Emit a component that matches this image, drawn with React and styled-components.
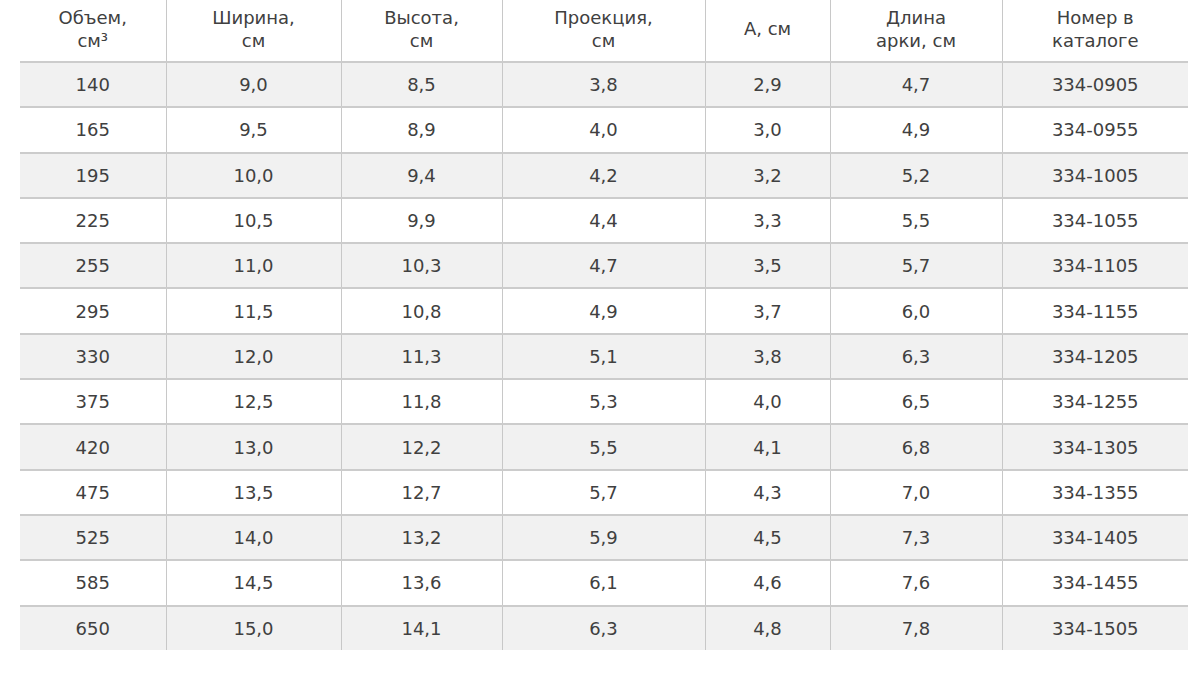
import React from 'react';
import styled, { createGlobalStyle } from 'styled-components';

const GlobalStyle = createGlobalStyle`
  body {
    margin: 0;
    background: #ffffff;
    font-family: "DejaVu Sans", Verdana, sans-serif;
  }
`;

const Wrap = styled.div`
  padding: 0 12px 0 20px;
`;

const Table = styled.table`
  width: 1168px;
  border-collapse: collapse;
  table-layout: fixed;
  color: #404040;
  font-size: 18px;
`;

const Th = styled.th`
  font-weight: normal;
  height: 57px;
  padding: 0 4px 4px;
  line-height: 23px;
  text-align: center;
  vertical-align: middle;
  border-left: 1px solid #c8c8c8;
  &:first-child {
    border-left: none;
  }
`;

const Tr = styled.tr`
  background: ${p => (p.$shaded ? '#f1f1f1' : '#ffffff')};
  border-top: 2px solid #cccccc;
`;

const Td = styled.td`
  height: 43.3px;
  padding: 0 4px;
  text-align: center;
  vertical-align: middle;
  border-left: 1px solid #c8c8c8;
  &:first-child {
    border-left: none;
  }
`;

const widths = [146, 175, 161, 203, 125, 172, 186];

const headers = [
  ['Объем,', 'см³'],
  ['Ширина,', 'см'],
  ['Высота,', 'см'],
  ['Проекция,', 'см'],
  ['А, см'],
  ['Длина', 'арки, см'],
  ['Номер в', 'каталоге'],
];

const rows = [
  ['140', '9,0', '8,5', '3,8', '2,9', '4,7', '334-0905'],
  ['165', '9,5', '8,9', '4,0', '3,0', '4,9', '334-0955'],
  ['195', '10,0', '9,4', '4,2', '3,2', '5,2', '334-1005'],
  ['225', '10,5', '9,9', '4,4', '3,3', '5,5', '334-1055'],
  ['255', '11,0', '10,3', '4,7', '3,5', '5,7', '334-1105'],
  ['295', '11,5', '10,8', '4,9', '3,7', '6,0', '334-1155'],
  ['330', '12,0', '11,3', '5,1', '3,8', '6,3', '334-1205'],
  ['375', '12,5', '11,8', '5,3', '4,0', '6,5', '334-1255'],
  ['420', '13,0', '12,2', '5,5', '4,1', '6,8', '334-1305'],
  ['475', '13,5', '12,7', '5,7', '4,3', '7,0', '334-1355'],
  ['525', '14,0', '13,2', '5,9', '4,5', '7,3', '334-1405'],
  ['585', '14,5', '13,6', '6,1', '4,6', '7,6', '334-1455'],
  ['650', '15,0', '14,1', '6,3', '4,8', '7,8', '334-1505'],
];

const App = () => {
  return (
    <Wrap>
      <GlobalStyle />
      <Table>
        <colgroup>
          {widths.map((w, i) => (
            <col key={i} style={{ width: w }} />
          ))}
        </colgroup>
        <thead>
          <tr>
            {headers.map((h, i) => (
              <Th key={i}>
                {h.map((line, j) => (
                  <React.Fragment key={j}>
                    {j > 0 && <br />}
                    {line}
                  </React.Fragment>
                ))}
              </Th>
            ))}
          </tr>
        </thead>
        <tbody>
          {rows.map((r, i) => (
            <Tr key={i} $shaded={i % 2 === 0}>
              {r.map((c, j) => (
                <Td key={j}>{c}</Td>
              ))}
            </Tr>
          ))}
        </tbody>
      </Table>
    </Wrap>
  );
};

export default App;
